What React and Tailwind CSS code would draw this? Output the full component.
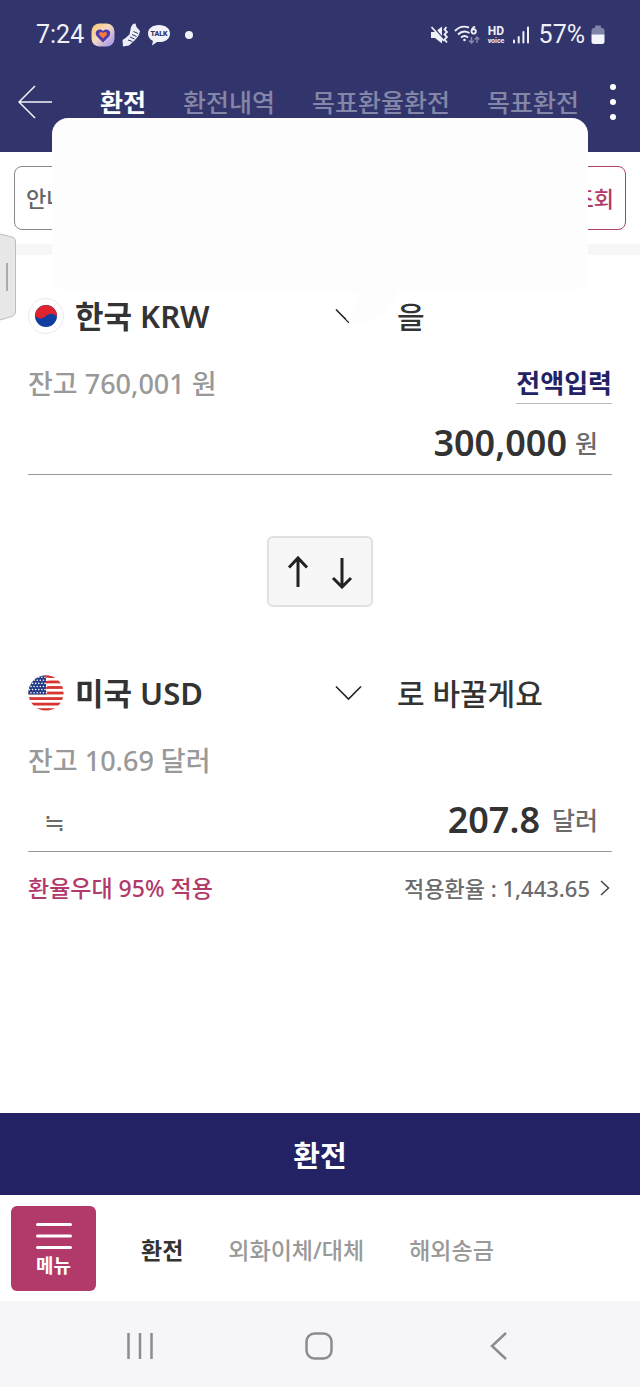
import { useState } from 'react';

const KoreaFlag = () => (
  <svg viewBox="0 0 36 36" className="size-9 shrink-0" aria-hidden="true">
    <circle cx="18" cy="18" r="17.5" fill="#fff" stroke="#e9e9f1" />
    <circle cx="18" cy="18" r="11" fill="#0f3ea0" />
    <path d="M7.4 15.2A11 11 0 0 1 29 18.8C26.500 15.200 21.500 14.500 18 18C14.500 21.500 9.500 21 7.300 17.400Z" fill="#e0242f" />
  </svg>
);

const stripes = [0, 2, 4, 6, 8, 10, 12];
const stars = [0, 1, 2, 3, 4, 5];

const UsaFlag = () => (
  <svg viewBox="0 0 36 36" className="size-9 shrink-0" aria-hidden="true">
    <clipPath id="usa-round">
      <circle cx="18" cy="18" r="17.6" />
    </clipPath>
    <g clipPath="url(#usa-round)">
      <rect width="36" height="36" fill="#fff" />
      {stripes.map((i) => (
        <rect key={i} x="0" y={i * 2.77} width="36" height="2.8" fill="#d8352f" />
      ))}
      <rect width="18" height="19.400" fill="#233a86" />
      {stars.map((row) =>
        stars.map((col) => (
          <circle key={`${row}-${col}`} cx={1.5 + col * 3.1 + (row % 2) * 1.5} cy={2.2 + row * 3.1} r="0.8" fill="#fff" />
        ))
      )}
      <rect x="18" y="0" width="18" height="2.8" fill="#d8352f" />
      <rect x="18" y="2.800" width="3" height="2.7" fill="#fff" />
    </g>
  </svg>
);

const Field = ({ id, flag, currency, options, suffix, balance, action, mark, amount, onAmount, unit }) => (
  <section>
    <div className="grid grid-cols-[337fr_215fr] items-center gap-8 text-[30px] text-[#333]">
      <div className="relative flex h-12 items-center gap-[11px]">
        {flag}
        <select
          aria-label={`${id} 통화`}
          defaultValue={currency}
          className="h-12 w-full min-w-0 appearance-none bg-transparent pr-8 text-[31px] leading-[48px] font-semibold text-[#333] outline-none"
        >
          {options.map((o) => (
            <option key={o}>{o}</option>
          ))}
        </select>
        <svg viewBox="0 0 28 16" className="pointer-events-none absolute right-[3px] h-4 w-7" fill="none" stroke="#222" strokeWidth="1.6" aria-hidden="true">
          <path d="M2 1.500L14.500 14L27 1.500" />
        </svg>
      </div>
      <span className="pt-[2px] leading-[46px] font-medium whitespace-nowrap">{suffix}</span>
    </div>
    <div className="mt-5 flex h-[46px] items-center justify-between">
      <span className="pt-[2px] text-[27px] font-medium text-[#999]">{balance}</span>
      {action}
    </div>
    <div className="mt-[6px] flex h-[63px] items-center border-b border-[#999] pr-[14px] pl-4 text-[#6b6b6b]">
      {mark && <span className="pt-[2px] font-['Noto_Sans_CJK_KR',sans-serif] text-[25px]">{mark}</span>}
      <input
        id={id}
        aria-label={`${id} 금액`}
        inputMode="decimal"
        value={amount}
        onChange={(e) => onAmount(e.target.value)}
        className="h-12 w-full min-w-0 bg-transparent text-right text-[36px] font-semibold text-[#333] outline-none"
      />
      <label htmlFor={id} className={`shrink-0 pt-[2px] text-[25px] font-medium ${mark ? 'ml-3' : 'ml-2'}`}>
        {unit}
      </label>
    </div>
  </section>
);

const StatusBar = () => (
  <div className="flex h-[70px] items-center justify-between pr-[35px] pl-9 font-[Roboto,sans-serif] text-[25px] text-[#f0f0f8]">
    <div className="flex items-center gap-[7px]">
      <span>7:24</span>
      <svg viewBox="0 0 24 24" className="size-6" aria-hidden="true">
        <defs>
          <linearGradient id="app-bg" x1="0" y1="0" x2="1" y2="1">
            <stop offset="0" stopColor="#ffc66b" />
            <stop offset="0.45" stopColor="#f3d9c4" />
            <stop offset="1" stopColor="#9a8cf5" />
          </linearGradient>
        </defs>
        <rect x="0.500" y="0.500" width="23" height="23" rx="8" fill="url(#app-bg)" />
        <path d="M12 19.500L6 13.500C2.500 9.500 7 4 12 8C17 4 21.500 9.500 18 13.500Z" fill="#4f3cab" />
        <path d="M12 15.500L8.500 12C7 9.500 10 7.800 12 10C14 7.800 17 9.500 15.500 12Z" fill="#ff7a35" />
      </svg>
      <svg viewBox="0 0 18 24" className="h-6 w-[18px]" aria-hidden="true">
        <path d="M9 4L11 1L13.500 .500L14.500 4L18 8C17.500 12 15 15 12 18L7 22.500L1 23.500L.500 17L3.500 15L7.500 11.500Z" fill="#eeeef8" />
        <path d="M11.500 8.500L16 10.500M10 11.500L14.500 13.500M8 14L12.500 16M6 17L10.500 18.500" stroke="#32356b" strokeWidth="1" fill="none" />
      </svg>
      <svg viewBox="0 0 24 24" className="size-6" aria-hidden="true">
        <path d="M12 2C5.500 2 1 5.500 1 10.500C1 14 3 16.500 6 18L5 22.500L10 19C18 19.800 23 16 23 10.500C23 5.500 18.500 2 12 2Z" fill="#f2f2fa" />
        <text x="12" y="13" textAnchor="middle" fontSize="7" fontWeight="900" fill="#32356b">TALK</text>
      </svg>
      <span className="ml-[7px] size-2 rounded-full bg-[#f0f0f8]" />
    </div>
    <div className="flex items-center gap-[6px]">
      <svg viewBox="0 0 18 20" className="h-5 w-[18px]" fill="#f0f0f8" aria-hidden="true">
        <path d="M1 7H5L12 1.500V18.500L5 13H1Z" />
        <path d="M2 .500L13 14" stroke="#32356b" strokeWidth="2" />
        <path d="M1.500 2L14 16" stroke="#f0f0f8" strokeWidth="1.800" />
        <path d="M16.500 2L14.500 4.500L17 7L14.500 9.500L17 12L14.500 14.500L17 17.500" stroke="#f0f0f8" strokeWidth="1.800" fill="none" />
      </svg>
      <svg viewBox="0 0 26 20" className="h-5 w-[26px]" fill="none" stroke="#f0f0f8" strokeWidth="1.900" aria-hidden="true">
        <path d="M1 6C4.500 2 10 .800 15 2.500M4 9.500C7 6.500 11.500 5.800 15.500 8M7 12.500C9 10.800 12 10.800 14 12.500" />
        <circle cx="10.500" cy="15" r="1.300" fill="#f0f0f8" stroke="none" />
        <path d="M21 1.500C18 3 17.500 5 17.500 6.500A2.200 2.200 0 1 0 18 5" />
        <path d="M17.500 12V18M15 15.500L17.500 18L20 15.500M23 18V12M20.700 14.500L23 12L25.300 14.500" stroke="#8587ad" strokeWidth="1.500" />
      </svg>
      <svg viewBox="0 0 20 28" className="h-7 w-5" fill="#f0f0f8" fontWeight="700" textAnchor="middle" role="img" aria-label="HD voice">
        <text x="10" y="14" fontSize="12">HD</text>
        <text x="10" y="22" fontSize="7">voice</text>
      </svg>
      <svg viewBox="0 0 18 18" className="size-[18px]" stroke="#f0f0f8" strokeWidth="2" strokeLinecap="round" aria-hidden="true">
        <path d="M2 14.500V16.500M6.700 11V16.500M11.400 6V16.500M16 1.500V16.500" />
      </svg>
      <span className="ml-[3px]">57%</span>
      <svg viewBox="0 0 14 20" className="h-5 w-[14px]" aria-hidden="true">
        <path d="M4 3V1.500Q4 .500 5 .500H9Q10 .500 10 1.500V3H11Q13.500 3 13.500 5.500V10H.500V5.500Q.500 3 3 3Z" fill="#8183aa" />
        <path d="M.500 9.500H13.500V16.500Q13.500 19 11 19H3Q.500 19 .500 16.500Z" fill="#f4f4fa" />
      </svg>
    </div>
  </div>
);

export default function App() {
  const [from, setFrom] = useState('300,000');
  const [to, setTo] = useState('207.8');

  return (
    <div className="relative flex min-h-screen flex-col bg-white font-['Noto_Sans','Noto_Sans_CJK_KR',sans-serif] text-[#333]">
      <header className="bg-[#32356b]">
        <StatusBar />
        <div className="flex h-[82px] items-start">
          <button aria-label="뒤로" className="ml-[15px] flex h-16 w-10 shrink-0 items-center justify-center">
            <svg viewBox="0 0 34 34" className="size-[34px]" fill="none" stroke="#f4f4fa" strokeWidth="1.500" aria-hidden="true">
              <path d="M34 17H1M17 1L1 17L17 33" />
            </svg>
          </button>
          <nav className="ml-[45px] flex h-16 min-w-0 flex-1 items-center gap-[37px] overflow-hidden pt-[2px] text-[25px] font-medium whitespace-nowrap text-[#8486a8]">
            <a href="#exchange" className="font-bold text-white">환전</a>
            <a href="#history">환전내역</a>
            <a href="#target-rate">목표환율환전</a>
            <a href="#target">목표환전</a>
          </nav>
          <button aria-label="더보기" className="mr-[24px] ml-[31px] flex h-16 shrink-0 flex-col items-center justify-center gap-[9px]">
            <span className="size-[6px] rounded-full bg-white" />
            <span className="size-[6px] rounded-full bg-white" />
            <span className="size-[6px] rounded-full bg-white" />
          </button>
        </div>
      </header>

      <div className="flex gap-3 border-b-[11px] border-[#f7f7f7] px-[14px] pt-[14px] pb-[14px] text-[22px] font-medium">
        <button className="h-16 flex-1 rounded-lg border border-[#888] px-[11px] text-left text-[#666]">안내</button>
        <button className="h-16 flex-1 rounded-lg border border-[#b0406f] px-[11px] text-right text-[#b23a6b]">조회</button>
      </div>

      <main className="flex-1 px-7 pt-[37px] pb-8">
        <Field
          id="보낼"
          flag={<KoreaFlag />}
          currency="한국 KRW"
          options={['한국 KRW', '미국 USD']}
          suffix="을"
          balance="잔고 760,001 원"
          action={<button className="h-[42px] border-b border-[#bbb] text-[26px] leading-[40px] font-semibold text-[#232264]">전액입력</button>}
          amount={from}
          onAmount={setFrom}
          unit="원"
        />
        <div className="mt-[61px] mb-[62px] flex justify-center">
          <button aria-label="통화 바꾸기" className="flex h-[71px] w-[106px] items-center justify-center rounded-md border-2 border-[#e0e0e0] bg-[#f7f7f7]">
            <svg viewBox="0 0 66 34" className="h-[34px] w-[66px]" fill="none" stroke="#222" strokeWidth="3" aria-hidden="true">
              <path d="M11 32V3M2 12.500L11 3L20 12.500M55 3V32M46 23L55 32L64 23" />
            </svg>
          </button>
        </div>
        <Field
          id="받을"
          flag={<UsaFlag />}
          currency="미국 USD"
          options={['미국 USD', '한국 KRW']}
          suffix="로 바꿀게요"
          balance="잔고 10.69 달러"
          mark="≒"
          amount={to}
          onAmount={setTo}
          unit="달러"
        />
        <div className="mt-[13px] flex h-[46px] items-center justify-between">
          <span className="text-[23px] font-medium text-[#b23a6b]">환율우대 95% 적용</span>
          <a href="#rate" className="flex items-center gap-[10px] pr-[2px] text-[22px] font-medium text-[#6b6b6b]">
            적용환율 : 1,443.65
            <svg viewBox="0 0 10 16" className="h-4 w-[10px]" fill="none" stroke="#444" strokeWidth="1.500" aria-hidden="true">
              <path d="M1 1L8.500 8L1 15" />
            </svg>
          </a>
        </div>
      </main>

      <button className="h-[82px] bg-[#232264] pt-1 text-[29px] font-bold text-white">환전</button>

      <nav className="flex h-[106px] items-center gap-[45px] pl-[11px] text-[23px] font-medium whitespace-nowrap text-[#999]">
        <button className="flex h-[85px] w-[85px] flex-col items-center justify-center rounded-md bg-[#b23a6b] pt-1 text-white">
          <svg viewBox="0 0 36 28" className="h-7 w-9" stroke="#fff" strokeWidth="3" strokeLinecap="round" aria-hidden="true">
            <path d="M1.500 2.500H34.500M1.500 14H34.500M1.500 25.500H34.500" />
          </svg>
          <span className="mt-1 text-[19px] leading-6 font-bold">메뉴</span>
        </button>
        <a href="#exchange" className="pt-1 font-bold text-[#333]">환전</a>
        <a href="#transfer" className="pt-1">외화이체/대체</a>
        <a href="#remit" className="pt-1">해외송금</a>
      </nav>

      <footer className="grid h-[86px] grid-cols-[280fr_78fr_282fr] items-center bg-[#f6f6f9] pt-1">
        <button aria-label="최근 앱" className="flex justify-center">
          <svg viewBox="0 0 28 28" className="size-7" stroke="#8c8c8f" strokeWidth="2.500" aria-hidden="true">
            <path d="M2.500 1V27M14 1V27M25.500 1V27" />
          </svg>
        </button>
        <button aria-label="홈" className="flex justify-center">
          <svg viewBox="0 0 28 28" className="size-7" fill="none" stroke="#8c8c8f" strokeWidth="2.500" aria-hidden="true">
            <rect x="1.500" y="1.500" width="25" height="25" rx="8" />
          </svg>
        </button>
        <button aria-label="이전" className="flex justify-center">
          <svg viewBox="0 0 28 28" className="size-7" fill="none" stroke="#8c8c8f" strokeWidth="2.500" aria-hidden="true">
            <path d="M21 1L7 14L21 27" />
          </svg>
        </button>
      </footer>

      <svg viewBox="0 0 17 88" className="absolute top-[233px] left-0 h-[88px] w-[17px]" aria-hidden="true">
        <path d="M0 1L12 4Q15.500 5 15.500 8V79Q15.500 82 12 83.500L0 87" fill="#e7e7e7" stroke="#bdbdbd" />
        <path d="M7 30V58" stroke="#999" strokeWidth="1.500" />
      </svg>

      <div role="tooltip" className="absolute inset-x-[52px] top-[118px] h-[174px] rounded-[16px] bg-[#fdfdfd]">
        <svg viewBox="0 0 52 32" className="absolute top-full left-[294px] h-8 w-[52px]" aria-hidden="true">
          <path d="M12 0H51C44 20 28 32 5 32L0 27C7 22 12 12 12 0Z" fill="#fdfdfd" />
        </svg>
      </div>
    </div>
  );
}
